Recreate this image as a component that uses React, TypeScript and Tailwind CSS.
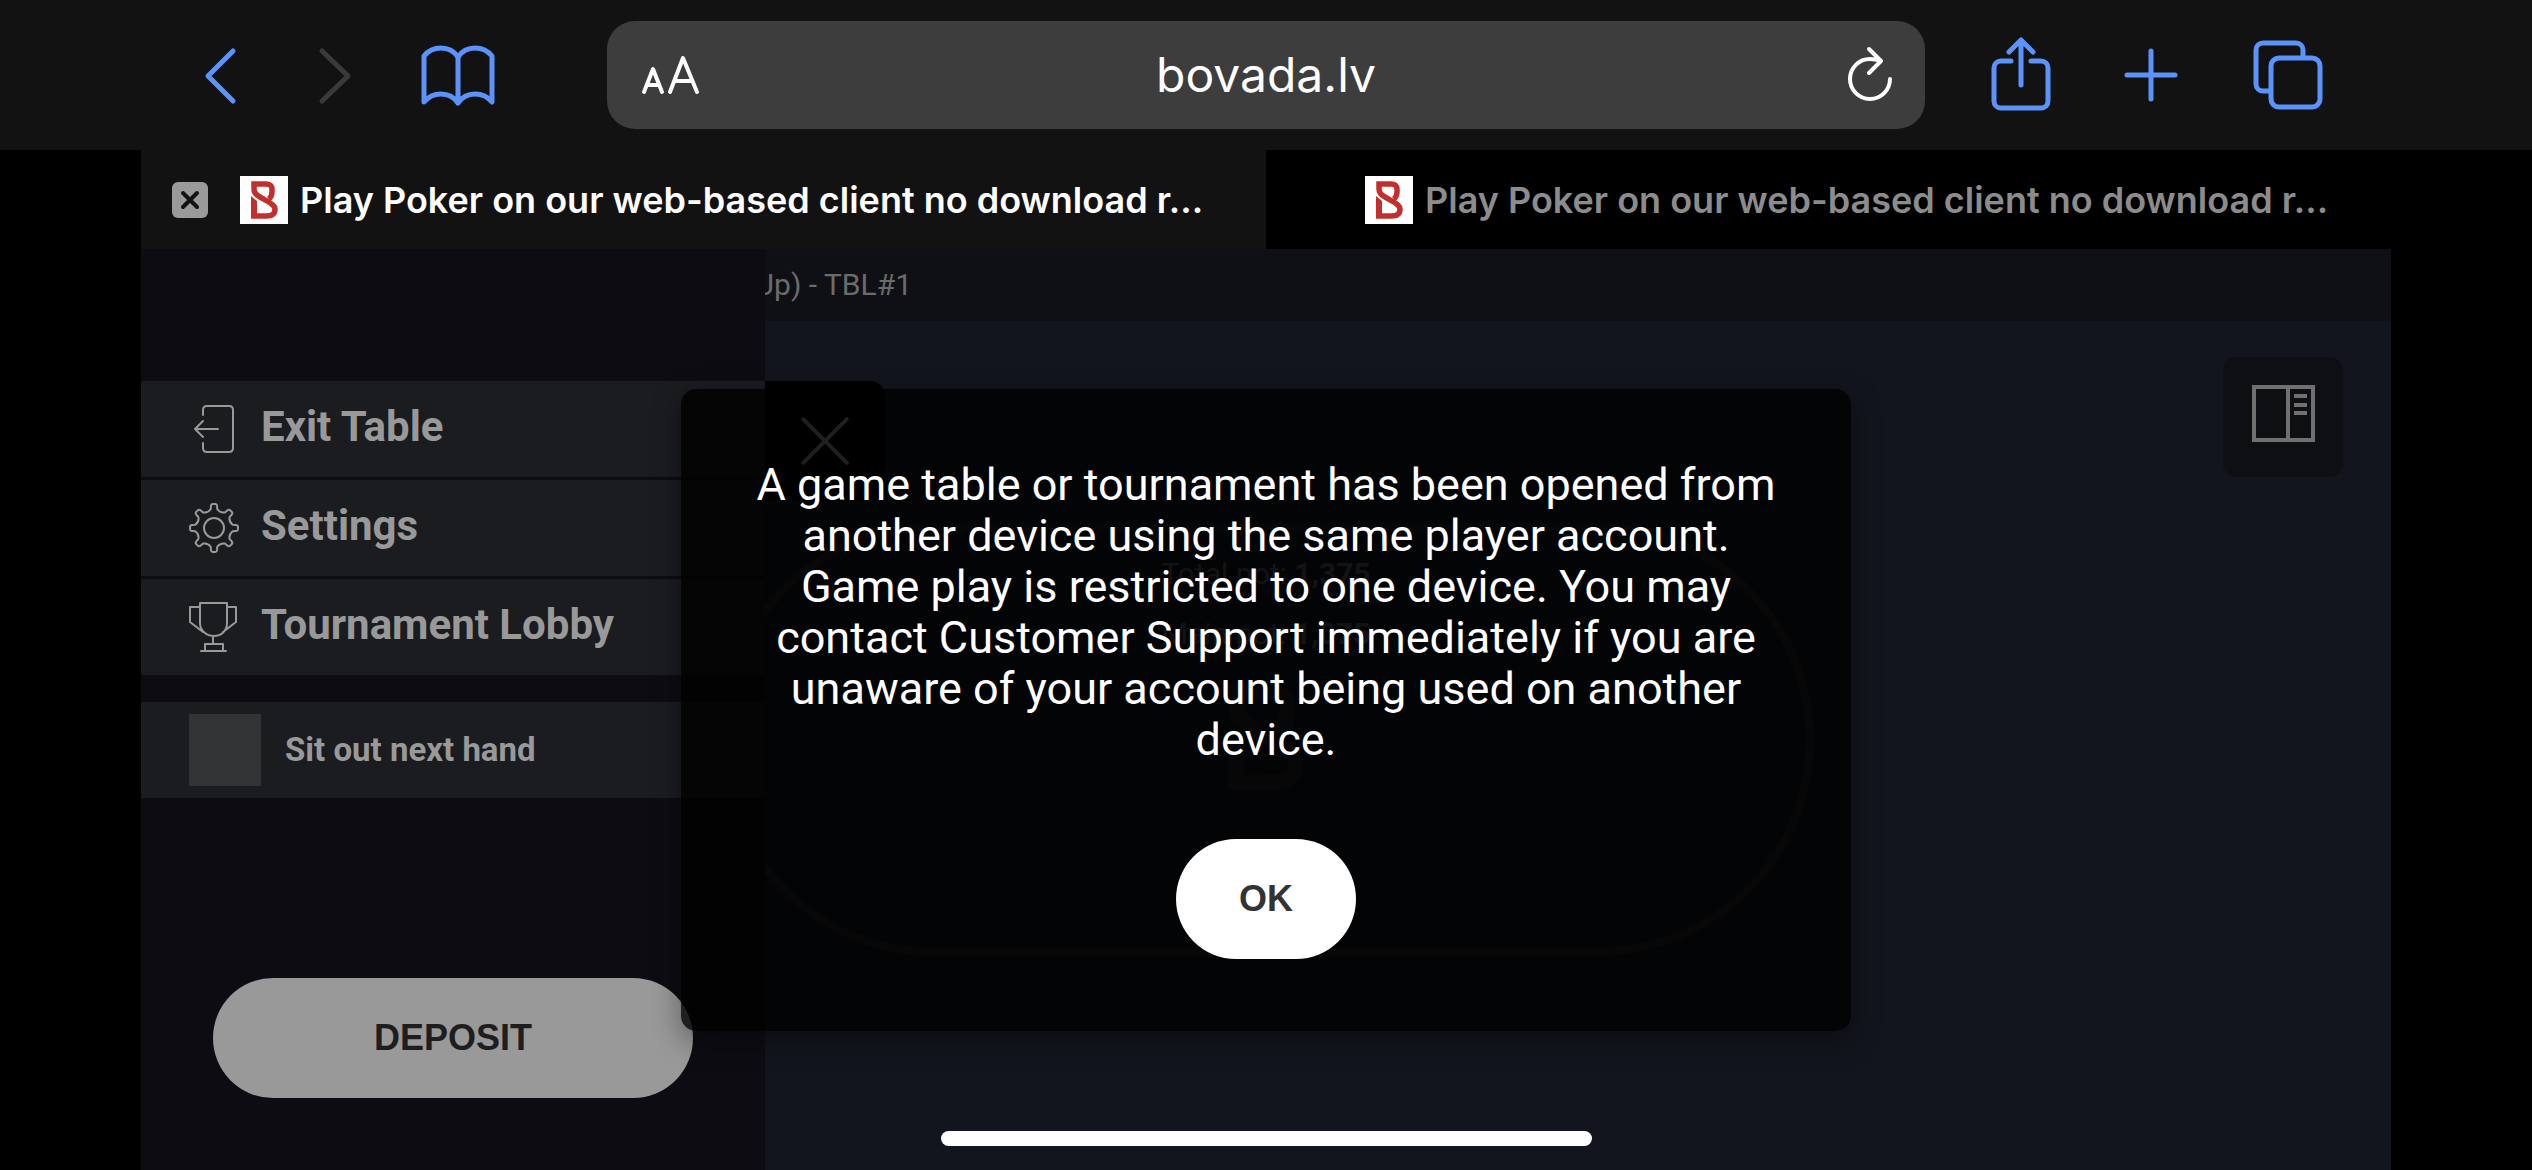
import type { ReactNode } from "react";

const TITLE = "Play Poker on our web-based client no download r...";

function Stroke({
  className,
  box,
  width,
  children,
}: {
  className: string;
  box: string;
  width: number;
  children: ReactNode;
}) {
  return (
    <svg
      aria-hidden="true"
      className={className}
      viewBox={box}
      fill="none"
      stroke="currentColor"
      strokeWidth={width}
      strokeLinecap="round"
      strokeLinejoin="round"
    >
      {children}
    </svg>
  );
}

function Logo({ className, box }: { className: string; box: string }) {
  return (
    <svg aria-hidden="true" viewBox={box} className={className} fill="none" stroke="currentColor" strokeWidth="5.5">
      <path d="M11 40h15c6 0 9-2 9-7 0-3-3-5-8-8l-7-4c-4-2-6-5-6-8V8h12c4 0 6 2 6 5v3c0 2-1 5-3 7" />
      <path d="M11 20l6 5v17h-6z" fill="currentColor" stroke="none" />
    </svg>
  );
}

function Favicon() {
  return (
    <span className="flex size-12 shrink-0 bg-white text-[#c2302e]">
      <Logo box="0 0 48 48" className="size-12" />
    </span>
  );
}

function polar(radius: number, degrees: number) {
  const a = (degrees * Math.PI) / 180;
  return `${(25 + radius * Math.sin(a)).toFixed(2)} ${(25 - radius * Math.cos(a)).toFixed(2)}`;
}

/* Eight rounded teeth joined by shallow concave valleys. */
const GEAR = Array.from({ length: 8 }, (_, i) => {
  const c = i * 45;
  return [
    `${i ? "L" : "M"}${polar(19, c - 10)}`,
    `L${polar(22, c - 8)}Q${polar(24, c - 7)} ${polar(24, c - 3)}`,
    `L${polar(24, c + 3)}Q${polar(24, c + 7)} ${polar(22, c + 8)}`,
    `L${polar(19, c + 10)}Q${polar(16, c + 22.5)} ${polar(19, c + 35)}`,
  ].join("");
}).join("") + "Z";

function Toolbar() {
  return (
    <header className="flex h-[150px] items-center bg-[#121212] pr-[209px] pl-[195px] font-[Inter,sans-serif]">
      <nav className="flex items-center text-[#5b93fb]">
        <button aria-label="Back">
          <Stroke className="h-[60px] w-[50px]" box="0 0 50 60" width={5}>
            <path d="M38 6 13 31l25 25" />
          </Stroke>
        </button>
        <button aria-label="Forward" disabled className="ml-[65px] text-[#3a3a3a]">
          <Stroke className="h-[60px] w-[50px]" box="0 0 50 60" width={5}>
            <path d="m12 6 26 25-26 25" />
          </Stroke>
        </button>
        <button aria-label="Bookmarks" className="ml-[60px]">
          <Stroke className="h-[64px] w-[76px]" box="0 0 76 64" width={5}>
            <path d="M38 14C34 8 28 5 21 5S8 8 4 13v46c4-5 10-8 17-8s13 3 17 9c4-6 10-9 17-9s13 3 17 8V13C68 8 62 5 55 5s-13 3-17 9zv46" />
          </Stroke>
        </button>
      </nav>
      <div className="ml-[111px] flex h-[108px] grow items-center justify-between rounded-[28px] bg-[#3d3d3d] pr-8 pl-[34px] text-white">
        <button aria-label="Page settings" className="flex w-[60px]">
          <Stroke className="h-[42px] w-[60px]" box="0 0 60 42" width={4}>
            <path d="m3 38 9-23 9 23M6 31h12M29 38 42 4l14 34M34 27h17" />
          </Stroke>
        </button>
        <span className="text-[48px] leading-[60px]">bovada.lv</span>
        <button aria-label="Reload" className="flex w-[62px] justify-end">
          <Stroke className="h-[58px] w-[46px]" box="0 0 46 58" width={4}>
            <path d="M34 15c-3-1-7-2-11-2A20 20 0 1 0 43 33M22 3l12 12-12 12" />
          </Stroke>
        </button>
      </div>
      <nav className="flex items-center text-[#5b93fb]">
        <button aria-label="Share" className="ml-[65px]">
          <Stroke className="h-[76px] w-[62px]" box="0 0 62 76" width={5}>
            <path d="M21 24H11c-4 0-7 3-7 7v33c0 4 3 7 7 7h40c4 0 7-3 7-7V31c0-4-3-7-7-7H41M31 48V3M19 15 31 3l12 12" />
          </Stroke>
        </button>
        <button aria-label="New tab" className="ml-[71px]">
          <Stroke className="size-[56px]" box="0 0 56 56" width={5}>
            <path d="M28 4v48M4 28h48" />
          </Stroke>
        </button>
        <button aria-label="Show tabs" className="ml-[74px]">
          <Stroke className="size-[70px]" box="0 0 70 70" width={5}>
            <path d="M17 51h-7c-4 0-7-3-7-7V10c0-4 3-7 7-7h33c4 0 7 3 7 7v7" />
            <rect x="18" y="18" width="49" height="49" rx="8" />
          </Stroke>
        </button>
      </nav>
    </header>
  );
}

function Tabs() {
  return (
    <div role="tablist" className="mx-[141px] grid h-[99px] grid-cols-2 font-[Inter,sans-serif] text-[36px] leading-[44px] font-semibold">
      <div className="flex min-w-0 items-center bg-[#121212] px-[31px]">
        <button aria-label="Close tab" className="flex size-9 shrink-0 items-center justify-center rounded-[6px] bg-[#9a9a9a] text-[#121212]">
          <Stroke className="size-5" box="0 0 20 20" width={4}>
            <path d="m3 3 14 14M17 3 3 17" />
          </Stroke>
        </button>
        <button role="tab" aria-selected="true" className="ml-8 flex min-w-0 items-center gap-3 text-white">
          <Favicon />
          <span className="whitespace-nowrap">{TITLE}</span>
        </button>
      </div>
      <div className="flex min-w-0 items-center bg-black pr-[31px] pl-[99px]">
        <button role="tab" aria-selected="false" className="flex min-w-0 items-center gap-3 text-[#8c8c8c]">
          <Favicon />
          <span className="whitespace-nowrap">{TITLE}</span>
        </button>
      </div>
    </div>
  );
}

function MenuRow({ icon, label }: { icon: ReactNode; label: string }) {
  return (
    <button className="flex h-24 w-full items-center gap-[22px] bg-[#1b1c20] pl-12 text-left text-[#999999]">
      {icon}
      <span className="pb-1 text-[42px] leading-[48px] font-bold">{label}</span>
    </button>
  );
}

function Sidebar() {
  return (
    <aside className="relative flex w-[624px] shrink-0 flex-col bg-[#0d0c12] pt-[132px] pb-[72px]">
      <nav className="flex flex-col gap-[3px]">
        <MenuRow
          label="Exit Table"
          icon={
            <Stroke className="size-[50px]" box="0 0 50 50" width={2}>
              <path d="M14 11V6c0-3 1-4 4-4h22c3 0 4 1 4 4v38c0 3-1 4-4 4H18c-3 0-4-1-4-4v-5M29 25H7M14 17l-8 8 8 8" />
            </Stroke>
          }
        />
        <MenuRow
          label="Settings"
          icon={
            <Stroke className="size-[50px]" box="0 0 50 50" width={2}>
              <circle cx="25" cy="25" r="10" />
              <path d={GEAR} />
            </Stroke>
          }
        />
        <MenuRow
          label="Tournament Lobby"
          icon={
            <Stroke className="size-[50px]" box="0 0 50 50" width={2}>
              <path d="M11 1h27v20c0 8-6 13-13 13s-14-5-14-13zM11 5H1v15l13 10M38 5h9v15L34 30M24 34v8M16 48v-6h18v6M12 49h25" />
            </Stroke>
          }
        />
      </nav>
      <label className="mt-[27px] flex h-24 items-center gap-6 bg-[#1b1c20] pl-12 text-[33px] leading-[40px] font-bold text-[#999999]">
        <input type="checkbox" className="size-[72px] appearance-none bg-[#323335]" />
        Sit out next hand
      </label>
      <button className="mx-[72px] mt-auto h-[120px] rounded-full bg-[#999999] font-['Liberation_Sans',sans-serif] text-[36px] leading-[42px] font-bold text-[#1e1e1e]">
        DEPOSIT
      </button>
      <button aria-label="Close menu" className="absolute top-[132px] left-full flex size-[120px] items-center justify-center rounded-r-[15px] bg-black text-[#999999]">
        <svg aria-hidden="true" viewBox="0 0 48 48" className="size-12" fill="none" stroke="currentColor" strokeWidth="4">
          <path d="m1 1 46 46M47 1 1 47" />
        </svg>
      </button>
    </aside>
  );
}

function Table() {
  return (
    <main className="flex min-w-0 grow flex-col bg-[#12151d]">
      <div className="flex h-[72px] items-center overflow-hidden bg-[#0f1015]">
        <div className="flex w-[147px] justify-end text-[30px] leading-[36px] whitespace-nowrap text-[#6b6b6b]">
          Up) - TBL#1
        </div>
      </div>
      <div className="flex justify-end pt-9 pr-12">
        <button aria-label="Toggle side panel" className="flex size-[120px] items-center justify-center rounded-[14px] bg-[#0e0f13] pb-2 text-[#707070]">
          <svg aria-hidden="true" viewBox="0 0 63 57" className="h-[57px] w-[63px]" fill="none" stroke="currentColor" strokeWidth="4">
            <path d="M2 2h59v53H2zM36 2v53M42 11h13M42 20h13M42 28h13" />
          </svg>
        </button>
      </div>
    </main>
  );
}

function Felt() {
  return (
    <div className="absolute top-[274px] left-1/2 flex h-[433px] w-[1096px] -translate-x-1/2 flex-col items-center rounded-full border-8 border-[#24262c] pt-[25px] text-[30px] leading-[36px] text-[#606165]">
      <p>Total pot: <b>1,375</b></p>
      <p className="mt-6">Main pot: <b>1,075</b></p>
      <Logo box="11 5 27 38" className="mt-7 h-[115px] w-[76px] text-[#24252b]" />
    </div>
  );
}

function Dialog() {
  return (
    <div className="absolute inset-x-0 top-[140px] flex justify-center">
      <section
        role="alertdialog"
        aria-labelledby="notice"
        className="flex w-[1170px] flex-col items-center rounded-[15px] bg-black/80 px-[72px] pt-[70px] pb-[72px] shadow-[0_9px_30px_rgba(0,0,0,0.4)]"
      >
        <p id="notice" className="text-center text-[45px] leading-[51px] text-white">
          A game table or tournament has been opened from another device using the same player account. Game play is restricted to one device. You may contact Customer Support immediately if you are unaware of your account being used on another device.
        </p>
        <button className="mt-[74px] h-[120px] w-[180px] rounded-full bg-white font-['Liberation_Sans',sans-serif] text-[36px] leading-[42px] font-bold text-[#333333]">
          OK
        </button>
      </section>
    </div>
  );
}

export default function App() {
  return (
    <div className="flex min-h-screen flex-col bg-black">
      <Toolbar />
      <Tabs />
      <div className="relative mx-[141px] flex grow overflow-hidden font-[Roboto,sans-serif]">
        <Felt />
        <Sidebar />
        <Table />
        <Dialog />
        <div className="absolute inset-x-0 bottom-6 flex justify-center">
          <div className="h-[15px] w-[651px] rounded-full bg-white" />
        </div>
      </div>
    </div>
  );
}
